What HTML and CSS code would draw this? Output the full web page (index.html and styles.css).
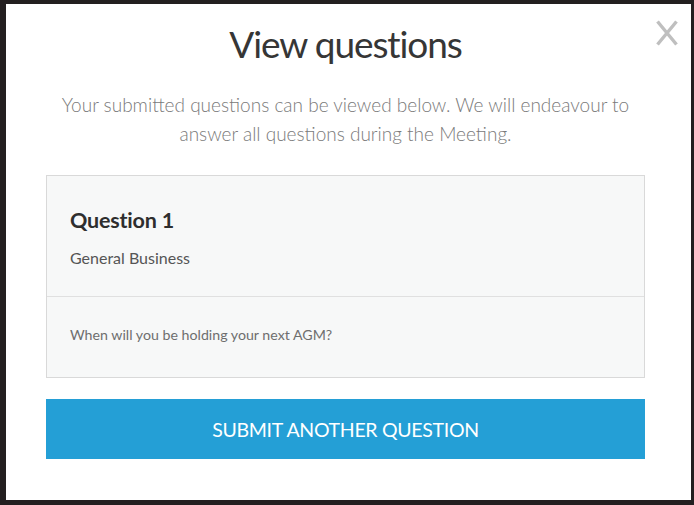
FILE: index.html
```html
<!DOCTYPE html>
<html lang="en">
<head>
<meta charset="utf-8">
<title>View questions</title>
<link rel="stylesheet" href="styles.css">
</head>
<body>
<div class="modal">
  <button class="close" aria-label="Close">
    <svg width="22" height="26" viewBox="0 0 22 26"><path d="M1.5 1.5 L20.5 24.5 M20.5 1.5 L1.5 24.5" stroke="#bfbfbf" stroke-width="3.4"/></svg>
  </button>
  <h1 class="title">View questions</h1>
  <p class="lead">Your submitted questions can be viewed below. We will endeavour to answer all questions during the Meeting.</p>
  <div class="card">
    <div class="card-head">
      <h2 class="q-title">Question 1</h2>
      <div class="q-topic">General Business</div>
    </div>
    <div class="card-body">When will you be holding your next AGM?</div>
  </div>
  <button class="submit">SUBMIT ANOTHER QUESTION</button>
</div>
</body>
</html>
```
FILE: styles.css
```css
html, body {
  margin: 0;
  padding: 0;
  background: #fff;
}
body {
  font-family: Lato, "Open Sans", sans-serif;
  width: 694px;
  height: 505px;
  overflow: hidden;
}
.modal {
  position: relative;
  box-sizing: border-box;
  width: 694px;
  height: 505px;
  border-style: solid;
  border-color: #231f20;
  border-width: 4px 3px 5px 6px;
  background: #fff;
  display: flex;
  flex-direction: column;
  align-items: center;
  padding: 0 46px 0 40px;
}
.close {
  position: absolute;
  top: 16px;
  right: 13px;
  background: none;
  border: 0;
  padding: 0;
  cursor: pointer;
  filter: blur(0.4px);
}
.close svg {
  display: block;
}
.title {
  margin: 15px 0 0;
  font-weight: 400;
  font-size: 37px;
  line-height: 50px;
  color: #363636;
  letter-spacing: -1.1px;
}
.lead {
  margin: 21px 0 0;
  font-weight: 300;
  font-size: 19px;
  line-height: 29px;
  color: #7a7a7a;
  text-align: center;
}
.card {
  margin-top: 27px;
  align-self: stretch;
  border: 1px solid #d9d9d9;
  background: #f7f8f8;
}
.card-head {
  padding: 29px 23px 28px;
  border-bottom: 1px solid #e0e0e0;
}
.q-title {
  margin: 0;
  font-weight: 700;
  font-size: 21.5px;
  line-height: 30px;
  color: #2e2e2e;
  letter-spacing: -0.2px;
}
.q-topic {
  margin-top: 13px;
  font-size: 16px;
  line-height: 20px;
  font-weight: 400;
  color: #555;
}
.card-body {
  padding: 29px 23px 34px;
  font-size: 14.2px;
  line-height: 17px;
  color: #6e6e6e;
}
.submit {
  margin-top: 21px;
  align-self: stretch;
  height: 60px;
  border: 0;
  background: #249fd6;
  color: #fff;
  font-family: Lato, sans-serif;
  font-size: 19.5px;
  font-weight: 400;
  letter-spacing: -0.3px;
}
```
